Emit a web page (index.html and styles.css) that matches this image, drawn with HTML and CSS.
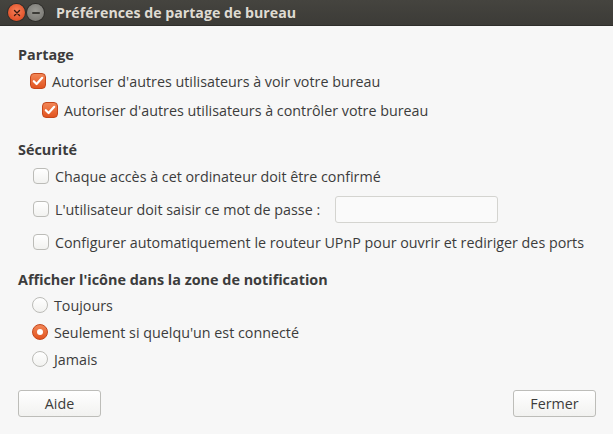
FILE: index.html
```html
<!DOCTYPE html>
<html lang="fr">
<head>
<meta charset="utf-8">
<title>Préférences de partage de bureau</title>
<link rel="stylesheet" href="styles.css">
</head>
<body>
<div class="window">
  <div class="titlebar">
    <span class="wbtn close"><svg width="8" height="8" viewBox="0 0 8 8"><path d="M1.5 1.5 L6.5 6.5 M6.5 1.5 L1.5 6.5" stroke="#3a1a10" stroke-width="1.4" stroke-linecap="round"/></svg></span>
    <span class="wbtn minimize"><span class="dash"></span></span>
    <span class="title">Préférences de partage de bureau</span>
  </div>
  <div class="content">
    <div class="heading">Partage</div>
    <div class="group share">
      <label class="row"><span class="check on"><svg width="12" height="10" viewBox="0 0 12 10"><path d="M1.8 5.2 L4.6 8 L10.2 1.8" fill="none" stroke="#fff" stroke-width="2.2" stroke-linecap="round" stroke-linejoin="round"/></svg></span><span class="text">Autoriser d'autres utilisateurs à voir votre bureau</span></label>
      <label class="row sub"><span class="check on"><svg width="12" height="10" viewBox="0 0 12 10"><path d="M1.8 5.2 L4.6 8 L10.2 1.8" fill="none" stroke="#fff" stroke-width="2.2" stroke-linecap="round" stroke-linejoin="round"/></svg></span><span class="text">Autoriser d'autres utilisateurs à contrôler votre bureau</span></label>
    </div>
    <div class="heading sec">Sécurité</div>
    <div class="group security">
      <label class="row"><span class="check"></span><span class="text">Chaque accès à cet ordinateur doit être confirmé</span></label>
      <label class="row"><span class="check"></span><span class="text">L'utilisateur doit saisir ce mot de passe :</span><span class="entry"></span></label>
      <label class="row"><span class="check"></span><span class="text">Configurer automatiquement le routeur UPnP pour ouvrir et rediriger des ports</span></label>
    </div>
    <div class="heading notif">Afficher l'icône dans la zone de notification</div>
    <div class="group radios">
      <label class="row"><span class="radio"></span><span class="text">Toujours</span></label>
      <label class="row"><span class="radio on"><span class="dot"></span></span><span class="text">Seulement si quelqu'un est connecté</span></label>
      <label class="row"><span class="radio"></span><span class="text">Jamais</span></label>
    </div>
    <div class="actions">
      <span class="button">Aide</span>
      <span class="button">Fermer</span>
    </div>
  </div>
</div>
</body>
</html>
```
FILE: styles.css
```css
* { box-sizing: border-box; }
html, body { margin: 0; padding: 0; }
body {
  width: 613px;
  height: 434px;
  overflow: hidden;
  background: #f7f7f7;
  font-family: "Open Sans", "Noto Sans", sans-serif;
  font-size: 14.3px;
  color: #3c3c3c;
}
.window { width: 613px; height: 434px; display: flex; flex-direction: column; }
.titlebar {
  height: 26px;
  flex: none;
  background: linear-gradient(#45443f, #3c3b37);
  border-bottom: 1px solid #2f2e2b;
  display: flex;
  align-items: center;
  padding-left: 8px;
}
.wbtn {
  width: 17px; height: 17px; border-radius: 50%;
  display: flex; align-items: center; justify-content: center;
  flex: none;
}
.close {
  background: radial-gradient(circle at 50% 40%, #f7815a, #e2532a 70%, #c2421c);
  box-shadow: 0 0 0 1px #2f2e2b;
}
.minimize {
  margin-left: 2px;
  background: radial-gradient(circle at 50% 40%, #9b9a94, #7e7d78 70%, #6a6965);
  box-shadow: 0 0 0 1px #2f2e2b;
}
.minimize .dash { width: 8px; height: 2px; background: #3c3b37; border-radius: 1px; }
.title {
  margin-left: 12px;
  color: #dfdbd2;
  font-weight: 700;
  font-size: 14.2px;
  padding-bottom: 1px;
}
.content {
  flex: 1;
  padding: 19px 17px 0 18px;
  display: flex;
  flex-direction: column;
}
.heading {
  font-weight: 700;
  font-size: 14.4px;
  height: 20px;
  line-height: 20px;
}
.heading.sec { margin-top: 16px; }
.heading.notif { margin-top: 12px; }
.group { display: flex; flex-direction: column; }
.row { display: flex; align-items: center; }
.share { margin-top: 2px; gap: 1px; padding-left: 12px; }
.share .row { height: 28px; }
.share .row.sub { padding-left: 12px; }
.security { gap: 1px; padding-left: 15px; }
.security .row { height: 32px; }
.radios { margin-top: 2px; gap: 1px; padding-left: 14px; }
.radios .row { height: 26px; }
.check {
  width: 16px; height: 16px; flex: none;
  border: 1px solid #bcbcb8;
  border-radius: 4px;
  background: linear-gradient(#ffffff, #f2f2f0);
  display: flex; align-items: center; justify-content: center;
}
.check.on {
  border-color: #c4471c;
  background: linear-gradient(#f28656, #e25420);
}
.radio {
  width: 16px; height: 16px; flex: none;
  border: 1px solid #bcbcb8;
  border-radius: 50%;
  background: linear-gradient(#ffffff, #f2f2f0);
  display: flex; align-items: center; justify-content: center;
}
.radio.on {
  border-color: #c4471c;
  background: linear-gradient(#f28656, #e25420);
}
.radio .dot { width: 6px; height: 6px; border-radius: 50%; background: #fff; }
.text { margin-left: 6px; white-space: nowrap; }
.entry {
  margin-left: 15px;
  width: 163px; height: 27px;
  border: 1px solid #d4d4d0;
  border-radius: 3px;
  background: #fafafa;
}
.actions {
  margin-top: 18px;
  display: flex;
  justify-content: space-between;
}
.button {
  width: 83px; height: 27px;
  border: 1px solid #bdbdb9;
  border-radius: 3px;
  background: linear-gradient(#ffffff, #f2f2f0);
  display: flex; align-items: center; justify-content: center;
  color: #3c3c3c;
}
```
